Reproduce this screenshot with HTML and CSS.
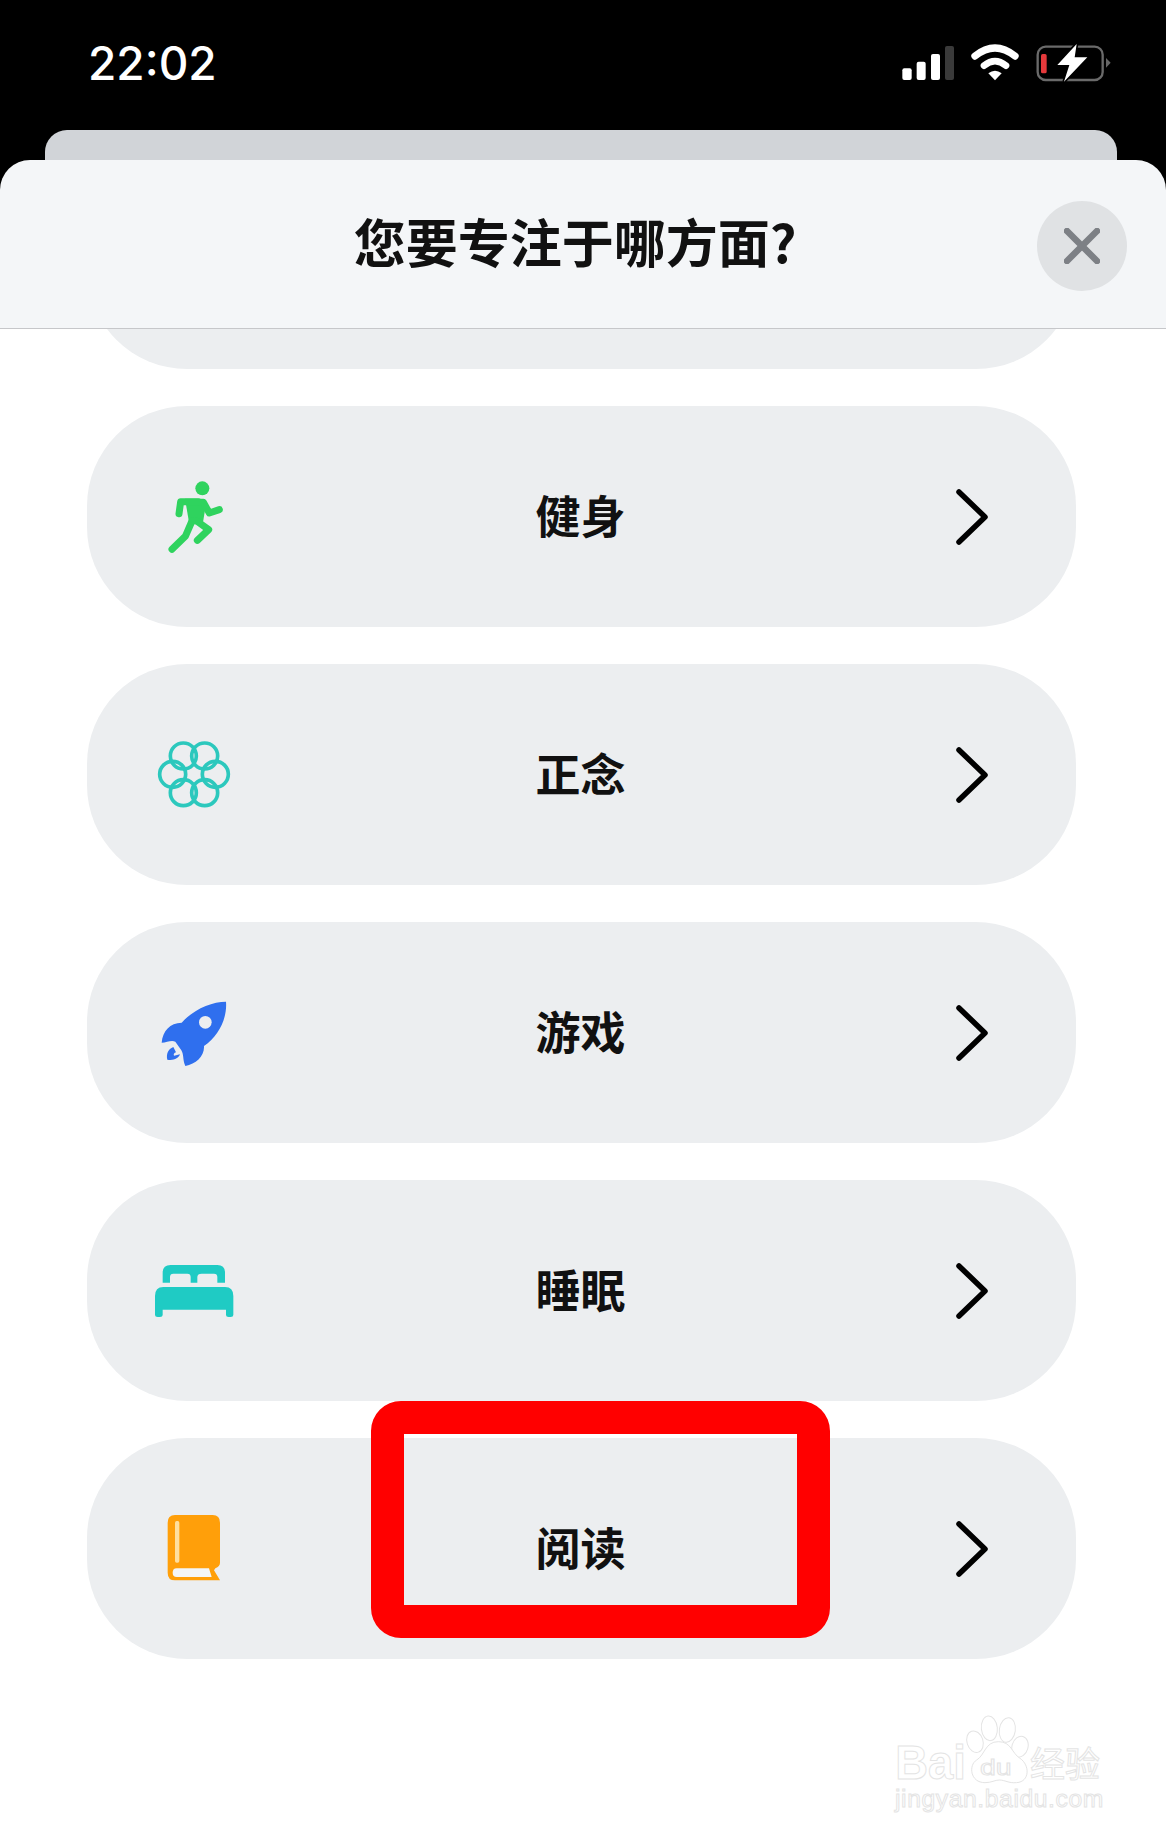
FILE: index.html
```html
<!DOCTYPE html>
<html lang="zh-CN">
<head>
  <meta charset="UTF-8">
  <meta name="viewport" content="width=device-width, initial-scale=1.0">
  <title>专注模式</title>
  <link rel="stylesheet" href="styles.css">
</head>
<body>

<div class="phone">

  <!-- Status bar and stacked sheets -->
  <div class="top">
    <div class="status-bar">
      <span class="time">22:02</span>
      <svg class="status-icons" viewBox="0 0 840 240" aria-hidden="true">
        <rect x="127" y="145" width="28" height="35" rx="6" fill="#fff"/>
        <rect x="170" y="125" width="27" height="55" rx="6" fill="#fff"/>
        <rect x="213" y="102" width="27" height="78" rx="6" fill="#fff"/>
        <rect x="255" y="78" width="27" height="102" rx="6" fill="#3a3a3a"/>
        <path d="M345 108 Q405 60 465 108" fill="none" stroke="#fff" stroke-width="22" stroke-linecap="round"/>
        <path d="M372 137 Q405 110 438 137" fill="none" stroke="#fff" stroke-width="20" stroke-linecap="round"/>
        <path d="M385 160 Q405 144 425 160 L405 181 Z" fill="#fff"/>
        <rect x="533" y="80" width="195" height="100" rx="24" fill="none" stroke="#6a6a6a" stroke-width="7"/>
        <path d="M738 114 L752 128 L738 143 Z" fill="#666"/>
        <rect x="543" y="102" width="17" height="58" rx="5" fill="#e5393b"/>
        <path d="M650 72 L592 135 H628 L612 185 L682 112 H644 Z" fill="#fff" stroke="#000" stroke-width="10" paint-order="stroke"/>
      </svg>
    </div>
    <div class="back-sheet"></div>
    <div class="sheet-header">
      <h1 class="sheet-title">您要专注于哪方面?</h1>
      <button type="button" class="close-button" aria-label="关闭">
        <svg viewBox="0 0 36 36" width="36" height="36" aria-hidden="true">
          <path d="M3 3 L33 33 M33 3 L3 33" fill="none" stroke="#7d8085" stroke-width="6.5" stroke-linecap="round"/>
        </svg>
      </button>
    </div>
  </div>

  <!-- Focus options -->
  <div class="option-list">
    <div class="option option-peek"></div>

    <div class="option">
      <svg class="option-icon" viewBox="0 -12 360 360" aria-hidden="true">
        <circle cx="187" cy="82" r="21" fill="#2fd35e"/>
        <path d="M135 113 H188 Q199 114 198 130 L188 190 L148 190 Z" fill="#2fd35e"/>
        <path d="M117 158 L122 122 H175 M190 124 L208 156 L238 146 M156 180 L136 226 L96 265 M170 180 L206 206 L172 238" fill="none" stroke="#2fd35e" stroke-width="21" stroke-linecap="round" stroke-linejoin="round"/>
      </svg>
      <span class="option-label">健身</span>
      <svg class="chevron" viewBox="0 0 32 56" aria-hidden="true"><path d="M3 3 L29 28 L3 53"/></svg>
    </div>

    <div class="option">
      <svg class="option-icon" viewBox="0 -18 360 360" aria-hidden="true">
        <g fill="none" stroke="#2cc8bd" stroke-width="11">
          <circle cx="226" cy="160" r="39"/>
          <circle cx="98" cy="160" r="39"/>
          <circle cx="194" cy="105" r="39"/>
          <circle cx="130" cy="105" r="39"/>
          <circle cx="194" cy="215" r="39"/>
          <circle cx="130" cy="215" r="39"/>
        </g>
      </svg>
      <span class="option-label">正念</span>
      <svg class="chevron" viewBox="0 0 32 56" aria-hidden="true"><path d="M3 3 L29 28 L3 53"/></svg>
    </div>

    <div class="option">
      <svg class="option-icon" viewBox="0 -24 360 360" aria-hidden="true">
        <path d="M258 62 C262 112 236 165 192 195 C194 225 168 250 136 255 C128 238 132 222 124 208 L106 182 C94 176 80 185 65 185 C68 150 90 125 125 125 C160 85 215 62 258 62 Z" fill="#2f6fee"/>
        <circle cx="196" cy="124" r="19" fill="#eceef0"/>
        <path d="M100 198 L108 214 C102 216 100 220 102 224 L120 220 C116 232 100 240 82 236 C78 220 84 204 100 198 Z" fill="#2f6fee"/>
      </svg>
      <span class="option-label">游戏</span>
      <svg class="chevron" viewBox="0 0 32 56" aria-hidden="true"><path d="M3 3 L29 28 L3 53"/></svg>
    </div>

    <div class="option">
      <svg class="option-icon" viewBox="0 -30 360 360" aria-hidden="true">
        <path d="M68 125 V95 Q68 72 92 72 H232 Q255 72 255 95 V125 H232 V108 Q232 98 222 98 H185 Q172 98 172 108 V125 H152 V108 Q152 98 142 98 H100 Q90 98 90 108 V125 Z" fill="#1fcbc4"/>
        <path d="M70 138 H255 Q280 138 280 165 V222 Q280 228 272 228 H266 Q258 228 258 222 V206 H68 V222 Q68 228 60 228 H53 Q45 228 45 222 V165 Q45 138 70 138 Z" fill="#1fcbc4"/>
      </svg>
      <span class="option-label">睡眠</span>
      <svg class="chevron" viewBox="0 0 32 56" aria-hidden="true"><path d="M3 3 L29 28 L3 53"/></svg>
    </div>

    <div class="option">
      <svg class="option-icon" viewBox="0 -6 360 360" aria-hidden="true">
        <path d="M105 72 H218 Q240 72 240 95 V215 Q240 226 226 232 L222 238 L240 268 H105 Q83 268 83 245 V95 Q83 72 105 72 Z" fill="#ff9f0a"/>
        <rect x="105" y="90" width="13" height="125" rx="5" fill="#ffdf9e"/>
        <path d="M110 232 H207 L215 258 H110 Q98 258 98 245 Q98 232 110 232 Z" fill="#f4f6f8"/>
      </svg>
      <span class="option-label">阅读</span>
      <svg class="chevron" viewBox="0 0 32 56" aria-hidden="true"><path d="M3 3 L29 28 L3 53"/></svg>
    </div>
  </div>

  <!-- Red annotation box -->
  <div class="highlight-box"></div>

  <!-- Watermark -->
  <svg class="watermark" viewBox="0 0 780 420" aria-hidden="true">
    <ellipse cx="315" cy="125" rx="24" ry="33" transform="rotate(-18 315 125)"/>
    <ellipse cx="358" cy="85" rx="24" ry="37" transform="rotate(-6 358 85)"/>
    <ellipse cx="412" cy="90" rx="24" ry="37" transform="rotate(8 412 90)"/>
    <ellipse cx="450" cy="140" rx="24" ry="32" transform="rotate(16 450 140)"/>
    <path d="M385 125 C345 125 345 165 320 180 C295 195 300 248 345 248 C365 248 375 240 388 240 C405 240 415 250 440 248 C480 245 480 195 450 175 C425 160 425 125 385 125 Z"/>
    <text class="wm-latin wm-bold" x="76" y="238" font-size="147" textLength="212" lengthAdjust="spacingAndGlyphs">Bai</text>
    <text class="wm-latin" x="330" y="225" font-size="68" textLength="95" lengthAdjust="spacingAndGlyphs">du</text>
    <text class="wm-cjk" x="480" y="232" font-size="105">经验</text>
    <text class="wm-latin" x="75" y="322" font-size="74" textLength="625">jingyan.baidu.com</text>
  </svg>

</div>

</body>
</html>
```

FILE: styles.css
```css
* {
  box-sizing: border-box;
}

body {
  margin: 0;
  background-color: #fff;
  font-family: "Noto Sans CJK SC", "Liberation Sans", sans-serif;
}

.phone {
  position: relative;
  width: 1166px;
  height: 1840px;
  overflow: hidden;
  background-color: #fff;
}

/* Status bar and sheets */
.top {
  background-color: #000;
}

.status-bar {
  display: flex;
  justify-content: space-between;
  height: 130px;
  padding: 20px 26px 0 88px;
}

.time {
  color: #fff;
  font-family: Inter, "Liberation Sans", sans-serif;
  font-size: 46px;
  font-weight: 500;
  line-height: 86px;
}

.status-icons {
  width: 280px;
  height: 80px;
}

.back-sheet {
  height: 30px;
  margin: 0 49px 0 45px;
  background-color: #d1d4d8;
  border-radius: 22px 22px 0 0;
}

.sheet-header {
  display: grid;
  grid-template-columns: 1fr auto 1fr;
  align-items: center;
  height: 169px;
  background-color: #f4f6f8;
  border-bottom: 1px solid #c6c7ca;
  border-radius: 30px 30px 0 0;
}

.sheet-title {
  grid-column: 2;
  margin: 0 16px 6px 0;
  color: #111;
  font-size: 52px;
  font-weight: 700;
  line-height: 1;
}

.close-button {
  grid-column: 3;
  justify-self: end;
  display: flex;
  align-items: center;
  justify-content: center;
  width: 90px;
  height: 90px;
  margin: 4px 39px 0 0;
  padding: 0;
  background-color: #e0e2e4;
  border: none;
  border-radius: 50%;
}

/* Focus options */
.option-list {
  display: flex;
  flex-direction: column;
  gap: 37px;
  height: 1511px;
  padding: 0 90px 0 87px;
  overflow: hidden;
}

.option {
  display: grid;
  grid-template-columns: 1fr auto 1fr;
  align-items: center;
  flex: none;
  height: 221px;
  background-color: #eceef0;
  border-radius: 100px;
}

.option-peek {
  margin-top: -181px;
}

.option-icon {
  width: 120px;
  height: 120px;
  margin-left: 53px;
}

.option-label {
  margin: 0 2px 4px 0;
  color: #111;
  font-size: 45px;
  font-weight: 700;
  line-height: 1;
}

.chevron {
  justify-self: end;
  width: 32px;
  height: 56px;
  margin-right: 88px;
  fill: none;
  stroke: #000;
  stroke-width: 5.5;
  stroke-linecap: round;
  stroke-linejoin: round;
}

/* Annotation over the last row */
.highlight-box {
  position: absolute;
  left: 371px;
  top: 1401px;
  width: 459px;
  height: 237px;
  border: 33px solid #f00;
  border-radius: 30px;
}

/* Watermark */
.watermark {
  position: absolute;
  left: 870px;
  top: 1700px;
  width: 260px;
  height: 140px;
  fill: #fff;
  stroke: #e4e4e4;
  stroke-width: 3;
}

.wm-latin {
  font-family: "Liberation Sans", sans-serif;
}

.wm-bold {
  font-weight: 700;
}

.wm-cjk {
  font-family: "Noto Sans CJK SC", sans-serif;
}
```
